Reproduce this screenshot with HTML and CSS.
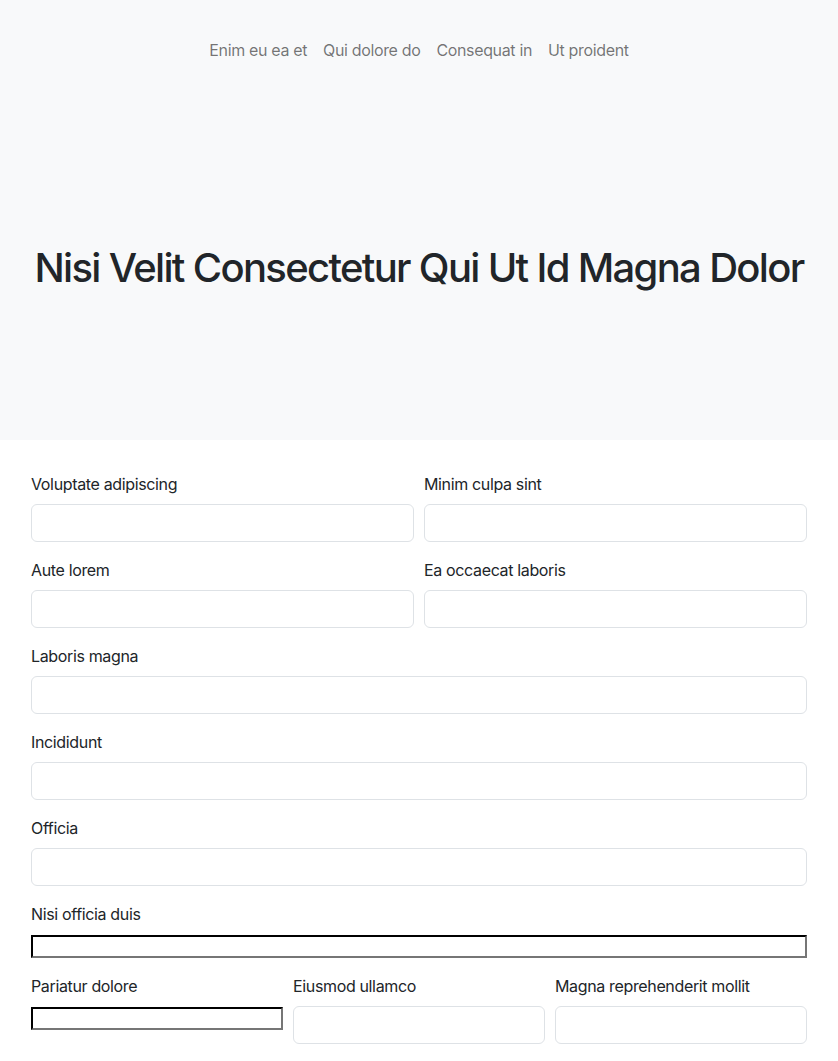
FILE: index.html
```html
<!DOCTYPE html>
<html lang="en">
<head>
<meta charset="utf-8">
<title>Form</title>
<link rel="stylesheet" href="styles.css">
</head>
<body>
<header class="hero">
  <nav class="nav">
    <a class="nav-link" href="#">Enim eu ea et</a>
    <a class="nav-link" href="#">Qui dolore do</a>
    <a class="nav-link" href="#">Consequat in</a>
    <a class="nav-link" href="#">Ut proident</a>
  </nav>
  <h1 class="title">Nisi Velit Consectetur Qui Ut Id Magna Dolor</h1>
</header>
<main class="form">
  <div class="row cols-2">
    <div class="field"><label class="label">Voluptate adipiscing</label><input class="control" type="text"></div>
    <div class="field"><label class="label">Minim culpa sint</label><input class="control" type="text"></div>
  </div>
  <div class="row cols-2">
    <div class="field"><label class="label">Aute lorem</label><input class="control" type="text"></div>
    <div class="field"><label class="label">Ea occaecat laboris</label><input class="control" type="text"></div>
  </div>
  <div class="field"><label class="label">Laboris magna</label><input class="control" type="text"></div>
  <div class="field"><label class="label">Incididunt</label><input class="control" type="text"></div>
  <div class="field"><label class="label">Officia</label><input class="control" type="text"></div>
  <div class="field"><label class="label">Nisi officia duis</label><input class="plain" type="text"></div>
  <div class="row cols-3">
    <div class="field"><label class="label">Pariatur dolore</label><input class="plain" type="text"></div>
    <div class="field"><label class="label">Eiusmod ullamco</label><input class="control" type="text"></div>
    <div class="field"><label class="label">Magna reprehenderit mollit</label><input class="control" type="text"></div>
  </div>
</main>
</body>
</html>
```
FILE: styles.css
```css
* { box-sizing: border-box; }
body {
  margin: 0;
  font-family: Inter, "Noto Sans", sans-serif;
  font-size: 16px;
  line-height: 24px;
  letter-spacing: -0.022em;
  color: #212529;
  background: #fff;
}
.hero {
  background: #f8f9fa;
  height: 440px;
  padding-top: 30px;
}
.nav {
  display: flex;
  justify-content: center;
}
.nav-link {
  display: block;
  padding: 8px;
  color: rgba(0, 0, 0, 0.55);
  text-decoration: none;
}
.title {
  margin: 174px 0 0;
  font-size: 40px;
  line-height: 48px;
  font-weight: 500;
  letter-spacing: -0.042em;
  text-align: center;
  white-space: nowrap;
}
.form {
  padding: 32px 31px;
}
.row {
  display: grid;
  column-gap: 10px;
}
.cols-2 { grid-template-columns: 1fr 1fr; }
.cols-3 { grid-template-columns: 1fr 1fr 1fr; }
.field {
  display: flex;
  flex-direction: column;
  margin-bottom: 16px;
}
.label {
  display: block;
  margin-bottom: 8px;
}
.control {
  display: block;
  width: 100%;
  height: 38px;
  padding: 6px 12px;
  border: 1px solid #dee2e6;
  border-radius: 6px;
  background: #fff;
  font: inherit;
}
.plain {
  display: block;
  width: 100%;
  height: 23px;
  margin-top: 1px;
  border: 2px inset #767676;
  border-color: #1a1a1a #767676 #767676 #1a1a1a;
  padding: 1px 2px;
  background: #fff;
  font-size: 13px;
}
```
